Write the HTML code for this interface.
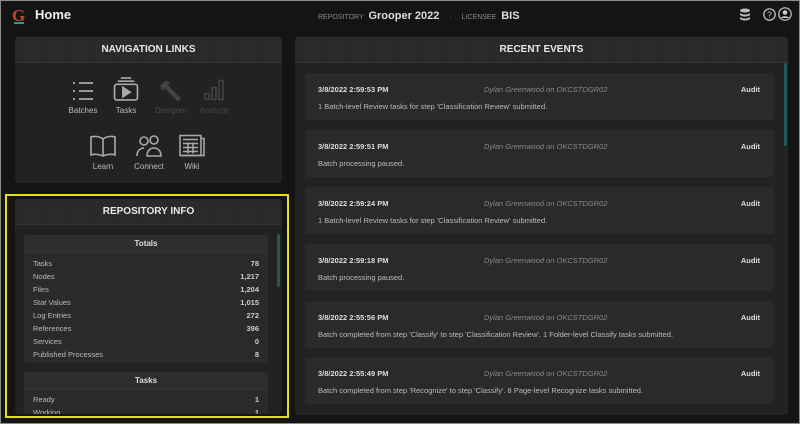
<!DOCTYPE html>
<html><head><meta charset="utf-8"><style>
*{box-sizing:border-box;margin:0;padding:0}
body{width:800px;height:424px;background:#141414;font-family:"Liberation Sans",sans-serif;color:#ccc;position:relative;overflow:hidden;border:1px solid #8a8a8a}
.abs{position:absolute}
.panel{position:absolute;background:#222;border-radius:4px;overflow:hidden}
.ph{height:26px;background:#272727;border-bottom:1px solid #333;text-align:center;font-weight:bold;font-size:10px;color:#e8e8e8;line-height:26px;background-image:linear-gradient(#2c2c2c 1px,transparent 1px),linear-gradient(90deg,#2c2c2c 1px,transparent 1px);background-size:3px 3px}
.card{position:absolute;left:10px;width:469px;height:47px;background:#2a2a2a;border-radius:3px;font-size:7.5px}
.card .d{position:absolute;left:13px;top:12px;font-weight:bold;color:#ddd}
.card .u{position:absolute;left:179px;top:12px;font-style:italic;color:#888}
.card .a{position:absolute;right:14px;top:12px;font-weight:bold;color:#ddd}
.card .m{position:absolute;left:13px;top:29px;color:#bbb}
.nav{position:absolute;text-align:center;font-size:8px;color:#bbb;width:44px}
.nav svg{display:block;margin:0 auto 4px}
.sub{position:absolute;left:9px;width:244px;background:#2a2a2a;border-radius:3px;overflow:hidden}
.sh{height:18px;line-height:18px;text-align:center;font-size:8px;font-weight:bold;color:#ddd;background:#2e2e2e;border-bottom:1px solid #333}
.row{display:flex;justify-content:space-between;font-size:7.5px;color:#bbb;padding:0 9px;height:13px;line-height:13px}
.row b{font-weight:bold;color:#ccc}
</style></head><body>
<div class="abs" style="left:11px;top:5px;font-family:'Liberation Serif',serif;font-size:17px;color:#c8452a;font-weight:bold">G</div>
<div class="abs" style="left:13px;top:20px;width:10px;height:3px;border-bottom:2px solid #2a9d8f"></div>
<div class="abs" style="left:34px;top:6px;font-size:13px;font-weight:bold;color:#eee">Home</div>
<div class="abs" style="left:317px;top:9px;font-size:7px;color:#888">REPOSITORY <span style="font-size:11px;font-weight:bold;color:#ddd;margin-left:3px">Grooper 2022</span> <span style="margin:0 8px">·</span> LICENSEE <span style="font-size:11px;font-weight:bold;color:#ddd;margin-left:3px">BIS</span></div>
<svg class="abs" style="left:738px;top:7px" width="12" height="13" viewBox="0 0 12 13"><ellipse cx="6" cy="2.5" rx="5" ry="2" fill="#bbb"/><path d="M1 4.5v2c0 1.1 2.2 2 5 2s5-.9 5-2v-2c0 1.1-2.2 2-5 2s-5-.9-5-2zM1 8.5v2c0 1.1 2.2 2 5 2s5-.9 5-2v-2c0 1.1-2.2 2-5 2s-5-.9-5-2z" fill="#bbb"/></svg>
<svg class="abs" style="left:762px;top:7px" width="13" height="13" viewBox="0 0 13 13"><circle cx="6.5" cy="6.5" r="5.7" fill="none" stroke="#ccc" stroke-width="1.2"/><text x="6.5" y="9.5" font-size="8.5" text-anchor="middle" fill="#ccc" font-family="Liberation Sans">?</text></svg>
<svg class="abs" style="left:777px;top:6px" width="14" height="14" viewBox="0 0 14 14"><circle cx="7" cy="7" r="6.2" fill="none" stroke="#ccc" stroke-width="1.2"/><circle cx="7" cy="5.5" r="2.3" fill="#ccc"/><path d="M3 11c1-2.3 7-2.3 8 0" fill="#ccc"/></svg>

<div class="panel" style="left:14px;top:36px;width:267px;height:146px">
<div class="ph">NAVIGATION LINKS</div>
<div class="nav" style="left:46px;top:43px"><svg width="24" height="22" viewBox="0 0 24 22" fill="none" stroke="#aaa" stroke-width="1.8"><path d="M2 3h2M2 11h2M2 19h2M8 3h14M8 11h14M8 19h14"/></svg>Batches</div>
<div class="nav" style="left:89px;top:40px"><svg width="28" height="25" viewBox="0 0 26 24" fill="none" stroke="#aaa" stroke-width="1.6"><path d="M8 1h10M5 4h16"/><rect x="2" y="7" width="22" height="15" rx="2"/><path d="M10 10v9l7-4.5z" fill="#aaa"/></svg>Tasks</div>
<div class="nav" style="left:134px;top:42px;color:#4a4a4a"><svg width="26" height="23" viewBox="0 0 26 22" fill="#444"><path d="M2 6l6-5 4 2-2 3 13 13-3 3L7 9 4 11z"/></svg>Designer</div>
<div class="nav" style="left:177px;top:40px;color:#444"><svg width="24" height="25" viewBox="0 0 24 24" fill="none" stroke="#444" stroke-width="1.5"><rect x="3" y="16" width="4" height="6"/><rect x="10" y="10" width="4" height="12"/><rect x="17" y="3" width="4" height="19"/></svg>Analyze</div>
<div class="nav" style="left:66px;top:97px"><svg width="28" height="24" viewBox="0 0 28 22" fill="none" stroke="#aaa" stroke-width="1.6"><path d="M14 4C10 1 5 1 2 2v18c3-1 8-1 12 1 4-2 9-2 12-1V2c-3-1-8-1-12 2zM14 4v17"/></svg>Learn</div>
<div class="nav" style="left:112px;top:97px"><svg width="28" height="24" viewBox="0 0 28 22" fill="none" stroke="#aaa" stroke-width="1.6"><circle cx="9" cy="6" r="4"/><circle cx="19" cy="5" r="4"/><path d="M2 21c0-5 3-8 7-8M12 21c0-5 3-8 7-8s7 3 7 8z"/></svg>Connect</div>
<div class="nav" style="left:155px;top:96px"><svg width="28" height="25" viewBox="0 0 28 24" fill="none" stroke="#aaa" stroke-width="1.5"><rect x="2" y="2" width="21" height="20"/><path d="M23 5h3v17H2M5 6h15M5 10h15M5 14h15M5 18h15M10 9v11M15 9v11"/></svg>Wiki</div>
</div>

<div class="abs" style="left:4px;top:193px;width:284px;height:224px;border:2px solid #e0e020"></div>
<div class="panel" style="left:14px;top:198px;width:267px;height:215px">
<div class="ph">REPOSITORY INFO</div>
<div class="abs" style="left:262px;top:35px;width:3px;height:53px;background:#1f5a5a;border-radius:2px"></div>
<div class="sub" style="top:36px;height:128px">
<div class="sh">Totals</div>
<div style="padding-top:4px">
<div class="row"><span>Tasks</span><b>78</b></div>
<div class="row"><span>Nodes</span><b>1,217</b></div>
<div class="row"><span>Files</span><b>1,204</b></div>
<div class="row"><span>Stat Values</span><b>1,015</b></div>
<div class="row"><span>Log Entries</span><b>272</b></div>
<div class="row"><span>References</span><b>396</b></div>
<div class="row"><span>Services</span><b>0</b></div>
<div class="row"><span>Published Processes</span><b>8</b></div>
</div></div>
<div class="sub" style="top:173px;height:50px">
<div class="sh">Tasks</div>
<div style="padding-top:3px"><div class="row"><span>Ready</span><b>1</b></div><div class="row"><span>Working</span><b>1</b></div></div>
</div>
</div>

<div class="panel" style="left:294px;top:36px;width:493px;height:378px">
<div class="ph">RECENT EVENTS</div>
<div class="abs" style="left:489px;top:26px;width:3px;height:83px;background:#1f5a5a;border-radius:2px"></div>
<div class="card" style="top:36px"><span class="d">3/8/2022 2:59:53 PM</span><span class="u">Dylan Greenwood on OKCSTDGR02</span><span class="a">Audit</span><span class="m">1 Batch-level Review tasks for step 'Classification Review' submitted.</span></div>
<div class="card" style="top:93px"><span class="d">3/8/2022 2:59:51 PM</span><span class="u">Dylan Greenwood on OKCSTDGR02</span><span class="a">Audit</span><span class="m">Batch processing paused.</span></div>
<div class="card" style="top:150px"><span class="d">3/8/2022 2:59:24 PM</span><span class="u">Dylan Greenwood on OKCSTDGR02</span><span class="a">Audit</span><span class="m">1 Batch-level Review tasks for step 'Classification Review' submitted.</span></div>
<div class="card" style="top:207px"><span class="d">3/8/2022 2:59:18 PM</span><span class="u">Dylan Greenwood on OKCSTDGR02</span><span class="a">Audit</span><span class="m">Batch processing paused.</span></div>
<div class="card" style="top:264px"><span class="d">3/8/2022 2:55:56 PM</span><span class="u">Dylan Greenwood on OKCSTDGR02</span><span class="a">Audit</span><span class="m">Batch completed from step 'Classify' to step 'Classification Review'. 1 Folder-level Classify tasks submitted.</span></div>
<div class="card" style="top:320px"><span class="d">3/8/2022 2:55:49 PM</span><span class="u">Dylan Greenwood on OKCSTDGR02</span><span class="a">Audit</span><span class="m">Batch completed from step 'Recognize' to step 'Classify'. 8 Page-level Recognize tasks submitted.</span></div>
</div>
</body></html>
